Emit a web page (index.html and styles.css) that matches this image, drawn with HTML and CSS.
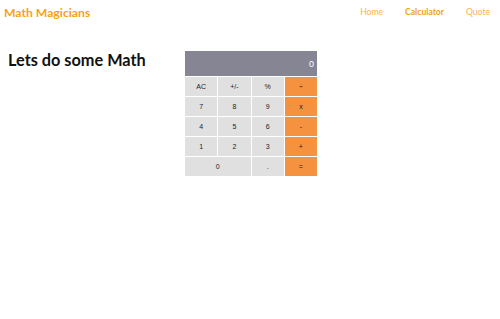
FILE: index.html
```html
<!DOCTYPE html>
<html>
<head>
<meta charset="utf-8">
<link rel="stylesheet" href="styles.css">
</head>
<body>
<header class="topbar">
  <h1 class="logo">Math Magicians</h1>
  <nav class="nav">
    <a class="nav-link">Home</a>
    <a class="nav-link active">Calculator</a>
    <a class="nav-link">Quote</a>
  </nav>
</header>
<main class="page">
  <h2 class="title">Lets do some Math</h2>
  <div class="calc">
    <div class="display">0</div>
    <button class="key">AC</button>
    <button class="key">+/-</button>
    <button class="key">%</button>
    <button class="key op">÷</button>
    <button class="key">7</button>
    <button class="key">8</button>
    <button class="key">9</button>
    <button class="key op">x</button>
    <button class="key">4</button>
    <button class="key">5</button>
    <button class="key">6</button>
    <button class="key op">-</button>
    <button class="key">1</button>
    <button class="key">2</button>
    <button class="key">3</button>
    <button class="key op">+</button>
    <button class="key zero">0</button>
    <button class="key">.</button>
    <button class="key op">=</button>
  </div>
</main>
</body>
</html>
```
FILE: styles.css
```css
* { box-sizing: border-box; }
body {
  margin: 0;
  font-family: Lato, "Open Sans", sans-serif;
  background: #fff;
}
.topbar {
  display: flex;
  justify-content: space-between;
  align-items: center;
  height: 24px;
  padding: 0 10px 0 4px;
}
.logo {
  margin: 0;
  font-size: 12.2px;
  font-weight: 700;
  color: #f5a30f;
}
.nav {
  display: flex;
  gap: 22px;
  font-size: 8.6px;
}
.nav-link {
  color: #f7b54a;
}
.nav-link.active {
  font-weight: 700;
  color: #f3a21a;
}
.page {
  display: flex;
  padding: 26px 0 0 8px;
}
.title {
  margin: 0;
  font-size: 16.3px;
  font-weight: 700;
  color: #111;
  width: 177px;
  white-space: nowrap;
  line-height: 20px;
}
.calc {
  display: grid;
  grid-template-columns: repeat(4, 1fr);
  grid-template-rows: 25px repeat(5, 19px);
  gap: 1px;
  width: 132px;
  background: #fff;
  margin-top: 1px;
}
.display {
  grid-column: 1 / 5;
  background: #858593;
  color: #fff;
  font-family: "Liberation Sans", Arial, sans-serif;
  font-size: 9px;
  text-align: right;
  padding: 8px 3px 0 0;
}
.key {
  border: 0;
  padding: 0;
  margin: 0;
  background: #e0e0e0;
  font-family: "Liberation Sans", Arial, sans-serif;
  font-size: 7px;
  color: #222;
}
.key.op {
  background: #f59240;
}
.key.zero {
  grid-column: span 2;
}
```
